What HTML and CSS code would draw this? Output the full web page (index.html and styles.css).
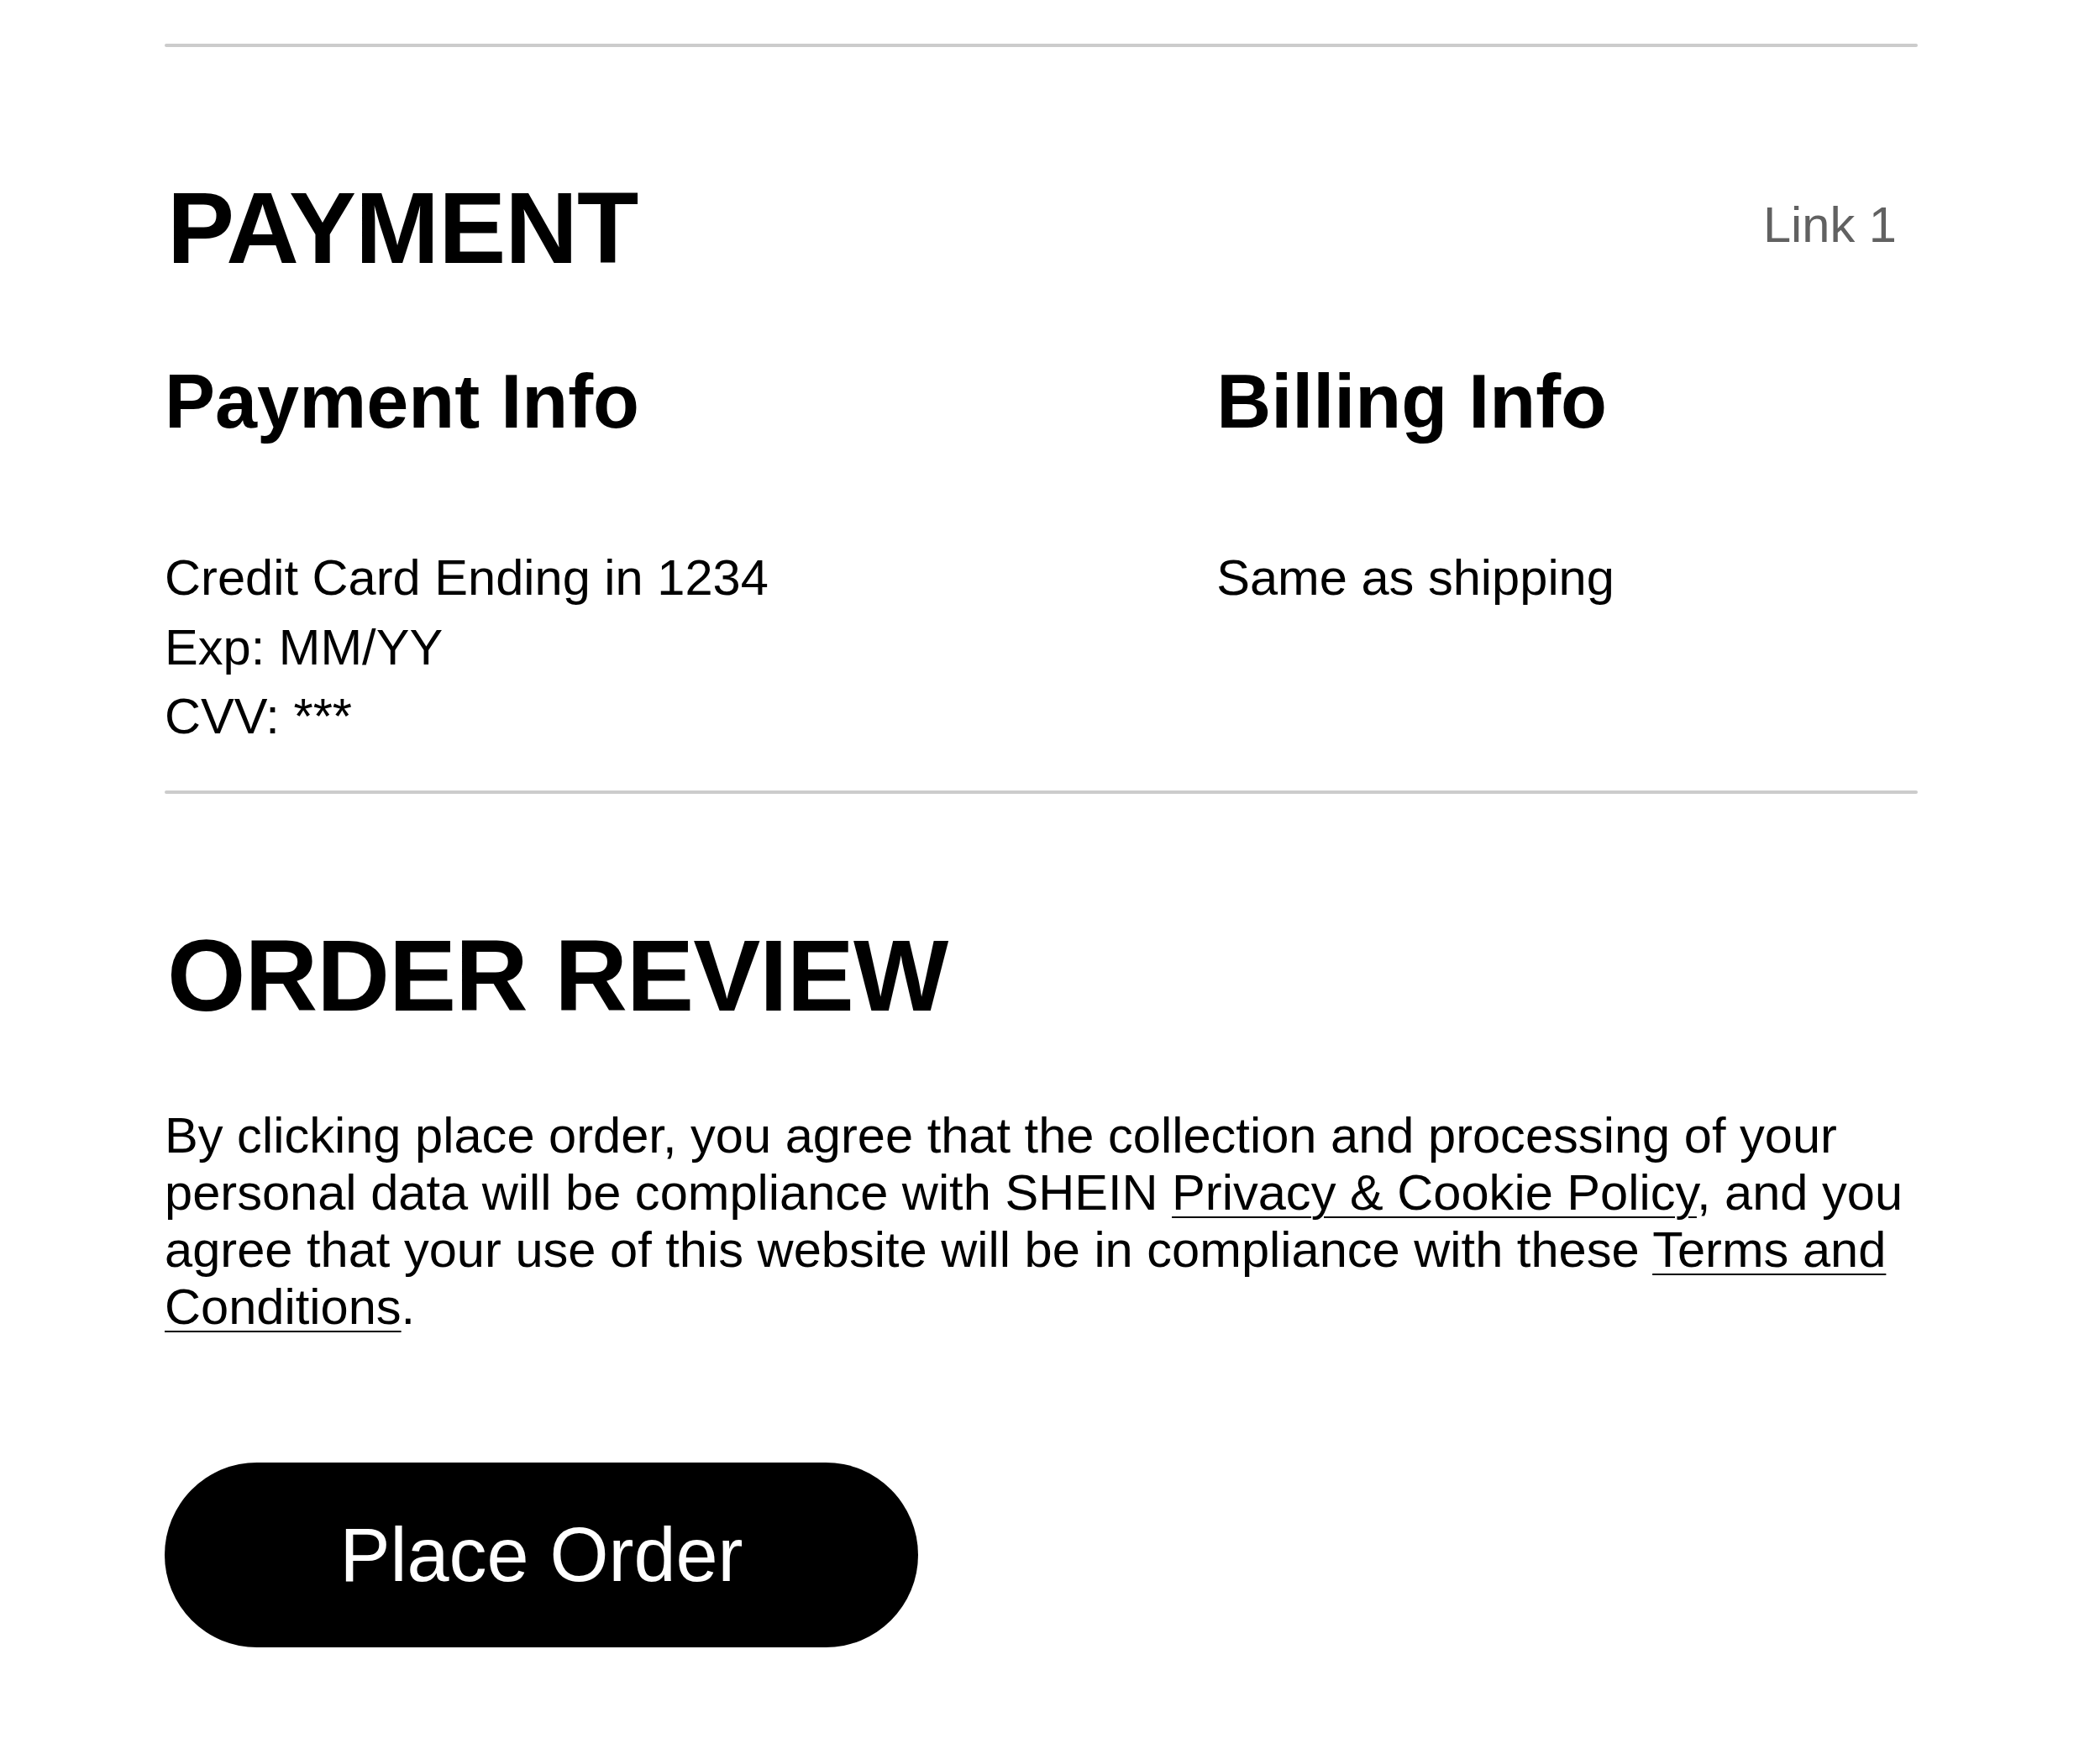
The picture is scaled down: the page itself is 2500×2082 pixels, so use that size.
FILE: index.html
```html
<!DOCTYPE html>
<html lang="en">
<head>
<meta charset="utf-8">
<title>Checkout - Payment &amp; Order Review</title>
<link rel="stylesheet" href="styles.css">
</head>
<body>
<main class="page">
  <div class="divider"></div>
  <section class="section section-payment">
    <div class="section-head">
      <h2 class="section-title">PAYMENT</h2>
      <a class="section-link" href="#">Link 1</a>
    </div>
    <div class="info-grid">
      <div class="info-col">
        <h3 class="info-title">Payment Info</h3>
        <p class="info-text">Credit Card Ending in 1234<br>Exp: MM/YY<br>CVV: ***</p>
      </div>
      <div class="info-col">
        <h3 class="info-title">Billing Info</h3>
        <p class="info-text">Same as shipping</p>
      </div>
    </div>
  </section>
  <div class="divider divider-mid"></div>
  <section class="section section-review">
    <h2 class="section-title">ORDER REVIEW</h2>
    <p class="legal">By clicking place order, you agree that the collection and processing of your personal data will be compliance with SHEIN <a class="legal-link" href="#">Privacy &amp; Cookie Policy</a>, and you agree that your use of this website will be in compliance with these <a class="legal-link" href="#">Terms and Conditions</a>.</p>
    <button class="place-order" type="button">Place Order</button>
  </section>
</main>
</body>
</html>
```

FILE: styles.css
```css
html, body {
  margin: 0;
  padding: 0;
  background: #ffffff;
}

body {
  font-family: "Liberation Sans", Arial, Helvetica, sans-serif;
  color: #000000;
}

.page {
  width: 2087px;
  margin-left: 196px;
  padding-top: 52px;
  padding-bottom: 121px;
}

.divider {
  height: 4px;
  background: #cccccc;
  border-radius: 2px;
}

.divider-mid {
  margin-top: 46px;
}

.section-payment {
  padding-top: 155px;
}

.section-review {
  padding-top: 156px;
}

.section-head {
  display: flex;
  align-items: center;
  justify-content: space-between;
  padding-right: 25px;
}

.section-title {
  margin: 0;
  padding-left: 3px;
  font-size: 120px;
  line-height: 120px;
  font-weight: 700;
  letter-spacing: -0.9px;
}

.section-link {
  font-size: 59.6px;
  line-height: 68px;
  color: #616161;
  text-decoration: none;
  margin-bottom: 6px;
}

.info-grid {
  display: grid;
  grid-template-columns: 60% 40%;
  margin-top: 102px;
}

.info-title {
  margin: 0;
  font-size: 90px;
  line-height: 90px;
  font-weight: 700;
}

.info-text {
  margin: 124px 0 0;
  font-size: 59.6px;
  line-height: 82.6px;
}

.legal {
  margin: 97px 0 0;
  font-size: 59.6px;
  line-height: 68px;
}

.legal-link {
  color: #000000;
  text-decoration: underline;
  text-decoration-thickness: 2px;
  text-underline-offset: 8px;
}

.place-order {
  display: flex;
  align-items: center;
  justify-content: center;
  margin-top: 151px;
  width: 897px;
  height: 220px;
  padding: 0;
  border: none;
  border-radius: 110px;
  background: #000000;
  color: #ffffff;
  font-family: "Liberation Sans", Arial, Helvetica, sans-serif;
  font-size: 90px;
  line-height: 1;
  cursor: pointer;
}
```
